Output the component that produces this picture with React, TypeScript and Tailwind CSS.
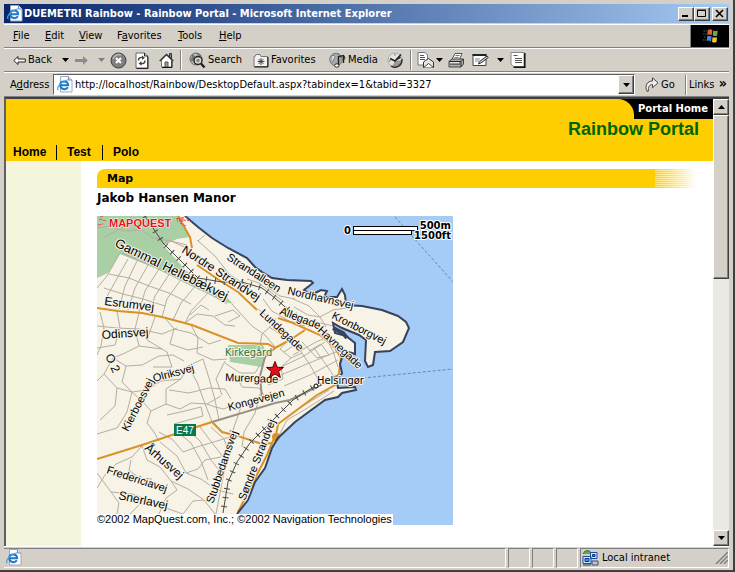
import type { ReactNode } from "react";

const ui = "font-['DejaVu_Sans_Condensed','DejaVu_Sans',sans-serif]";
const verdana = "font-['DejaVu_Sans',sans-serif] font-bold";
const arial = "font-['Liberation_Sans',sans-serif] font-bold";

const raised =
  "border border-t-white border-l-white border-r-[#404040] border-b-[#404040] bg-[#d4d0c8] shadow-[inset_-1px_-1px_0_#808080]";

function Caret({ dim = false, up = false }: { dim?: boolean; up?: boolean }) {
  return (
    <svg width="7" height="4" viewBox="0 0 7 4" className="shrink-0" fill={dim ? "#808080" : "#000"}>
      <path d={up ? "M0 4L3.5 0L7 4z" : "M0 0h7L3.5 4z"} />
    </svg>
  );
}

function Globe() {
  return (
    <svg width="17" height="17" viewBox="0 0 17 17" className="shrink-0">
      <path d="M4.500 .5h8l3.500 3.500v12H4.500z" fill="#fff" stroke="#9aa8bc" />
      <path d="M12.500 .5v3.500h3.500" fill="#dde6f0" stroke="#7b8aa3" />
      <path d="M11.800 11.200c-1.800 3.200-7.600 2.300-7.600-2.200 0-4.600 7.800-5 7.900.2H5" fill="none" stroke="#1e78c8" strokeWidth="2" />
      <path d="M2.500 14c-3-1 1.500-8.500 10.500-10.500" fill="none" stroke="#4aa0e4" strokeWidth="1.200" />
    </svg>
  );
}

function BackArrow() {
  return (
    <svg width="13" height="11" viewBox="0 0 13 11">
      <path d="M.8 5.5L5 1.5v2.500h7.3v3H5v2.500z" fill="#fff" stroke="#222" />
    </svg>
  );
}

function ForwardArrow() {
  return (
    <svg width="13" height="11" viewBox="0 0 13 11">
      <path d="M12.8 5.5L8 1v3H0v3h8v3z" fill="#8c8c8c" />
    </svg>
  );
}

function StopIcon() {
  return (
    <svg width="17" height="17" viewBox="0 0 17 17">
      <circle cx="8.5" cy="8.5" r="7.5" fill="#808080" stroke="#3c3c3c" />
      <path d="M3 7a6 6 0 0 1 8-4" stroke="#bbb" strokeWidth="1.5" fill="none" />
      <path d="M6 6l5 5M11 6l-5 5" stroke="#fff" strokeWidth="2" />
    </svg>
  );
}

function RefreshIcon() {
  return (
    <svg width="14" height="17" viewBox="0 0 14 17">
      <path d="M1 1h8.500l3 3v12H1z" fill="#fff" stroke="#666" />
      <path d="M9.500 1v3h3M13 4.500V16.500H1.500" fill="none" stroke="#222" />
      <path d="M3.500 8.500C3.500 6 5 5 8 5.500M10 8.500c0 2.500-1.500 3.500-4.500 3" fill="none" stroke="#444" strokeWidth="1.500" />
      <path d="M7 3.500L10 5.700 7 8zM6.500 9L3.500 11.500 6.500 13.700z" fill="#444" />
    </svg>
  );
}

function HomeIcon() {
  return (
    <svg width="15" height="16" viewBox="0 0 15 16">
      <path d="M10.500 5V1.500h2V7" fill="#888" stroke="#333" />
      <path d="M2.500 8v7h10V8l-5-5z" fill="#fff" stroke="#777" />
      <path d="M.7 9L7.500 2.500 14.300 9" fill="none" stroke="#333" strokeWidth="1.300" />
      <path d="M6 15v-5h3v5z" fill="#999" stroke="#555" />
      <path d="M13 9v6.500H3" stroke="#111" fill="none" />
    </svg>
  );
}

function SearchIcon() {
  return (
    <svg width="17" height="17" viewBox="0 0 17 17">
      <circle cx="7" cy="7" r="6" fill="#b8b8b8" stroke="#666" />
      <path d="M3 3c2 0 3 2 2 4S3 9 2 8M8 1c0 2 3 2 4 3" fill="#777" stroke="#666" />
      <circle cx="9" cy="8.500" r="4" fill="#d8d8d8" stroke="#222" strokeWidth="1.400" />
      <circle cx="9" cy="8.500" r="1.800" fill="#888" />
      <path d="M12 11.500l3.500 4" stroke="#222" strokeWidth="2.400" />
    </svg>
  );
}

function FavoritesIcon() {
  return (
    <svg width="16" height="15" viewBox="0 0 16 15">
      <path d="M1 3.500h1l1-2h4l1 2h6.500v10H1z" fill="#f2f2f2" stroke="#777" />
      <path d="M15 4v10H1.500" fill="none" stroke="#111" />
      <path d="M8 5v7M4.500 8.500h7M5.500 6l5 5M10.500 6l-5 5" stroke="#333" strokeWidth=".9" />
    </svg>
  );
}

function MediaIcon() {
  return (
    <svg width="17" height="17" viewBox="0 0 17 17">
      <circle cx="7" cy="7.500" r="6.300" fill="#aaa" stroke="#777" />
      <path d="M3 4c3-2 4 1 2 3s0 4-2 3M8 2c2 1 4 1 4 4" fill="#ddd" stroke="#777" />
      <path d="M9.500 13V4.500l5-1V11" fill="none" stroke="#222" strokeWidth="1.400" />
      <ellipse cx="7.800" cy="13.500" rx="2.200" ry="1.700" fill="#fff" stroke="#222" />
      <path d="M14.500 3.500c1.500 1 1.500 2 1 4" stroke="#222" fill="none" />
    </svg>
  );
}

function HistoryIcon() {
  return (
    <svg width="17" height="16" viewBox="0 0 17 16">
      <circle cx="8" cy="8" r="7" fill="#e4e4e4" stroke="#aaa" />
      <path d="M5 14.500A7 7 0 0 0 15 8L8 9z" fill="#999" />
      <path d="M14.800 7A7 7 0 0 1 4 14" fill="none" stroke="#333" strokeWidth="1.500" />
      <path d="M3 6.500L8 9l6-6.500" fill="none" stroke="#222" strokeWidth="1.600" />
      <path d="M8 9l5-4.500 1 1.500z" fill="#222" />
      <path d="M8 2v1.500M2 9h1.500" stroke="#555" />
    </svg>
  );
}

function MailIcon() {
  return (
    <svg width="17" height="16" viewBox="0 0 17 16">
      <path d="M1 .5h7l2.500 2.500v10H1z" fill="#fff" stroke="#777" />
      <path d="M3 3.500h4M3 5.500h5M3 7.500h5" stroke="#555" />
      <path d="M6.500 10l5-3.500 5 3.500v5.500h-10z" fill="#e8e8e8" stroke="#333" />
      <path d="M6.500 15.500l5-4 5 4" fill="#fff" stroke="#444" />
    </svg>
  );
}

function PrintIcon() {
  return (
    <svg width="17" height="15" viewBox="0 0 17 15">
      <path d="M4 6.500L7 .5h7l-2.500 6" fill="#fff" stroke="#555" />
      <path d="M7.500 2.500h4M6.500 4.500h4" stroke="#777" />
      <path d="M1 8.500l3-2.500h11.500v5L13 14H1z" fill="#b0b0b0" stroke="#444" />
      <path d="M1 8.500h12V14M13 8.500l2.500-2.500M2 11h10" fill="none" stroke="#222" />
      <path d="M2 9.800h9" stroke="#fff" />
    </svg>
  );
}

function EditIcon() {
  return (
    <svg width="17" height="14" viewBox="0 0 17 14">
      <path d="M1 1.500h13v11H1z" fill="#fff" stroke="#444" />
      <path d="M.5 2h14" stroke="#222" strokeWidth="2" />
      <path d="M3 6h5M3 8h4" stroke="#888" />
      <path d="M6.500 11l1-2.500L15 3l1.300 1.500-7.500 5.500z" fill="#ccc" stroke="#333" />
    </svg>
  );
}

function DiscussIcon() {
  return (
    <svg width="16" height="16" viewBox="0 0 16 16">
      <path d="M1 .5h13v14H3.500L1 12z" fill="#fff" stroke="#888" />
      <path d="M14.800 1v14.300H3.500" fill="none" stroke="#111" strokeWidth="1.500" />
      <path d="M3.500 3.500h4M5 6.500h7M5 8.500h7M5 10.500h7" stroke="#555" />
    </svg>
  );
}

function GoIcon() {
  return (
    <svg width="14" height="15" viewBox="0 0 14 15">
      <path d="M2 14.300C-.5 9 2 4 7.500 4V.8l5.500 5-5.500 5V7.500C4.500 7.500 3 10 3.500 14z" fill="#eee" stroke="#444" />
    </svg>
  );
}

function Throbber() {
  return (
    <svg width="18" height="16" viewBox="0 0 18 16">
      <g transform="skewX(-6) translate(2 0)">
        <path d="M5 2q2-1.500 4.500 0v5Q7 6 5 7z" fill="#e8602c" />
        <path d="M10.500 2.500q2.500 1 4.500 0v5q-2 1-4.500 0z" fill="#6aa84f" />
        <path d="M5 8.500q2-1.500 4.500 0v5Q7 12 5 13z" fill="#4a86d8" />
        <path d="M10.500 9q2.500 1 4.500 0v5q-2 1-4.500 0z" fill="#f4c430" />
        <path d="M1 3h3M1 6h3M2 9h2M1 12h3" stroke="#5a7fb8" strokeDasharray="1 1" />
      </g>
    </svg>
  );
}

function IntranetIcon() {
  return (
    <svg width="17" height="16" viewBox="0 0 17 16">
      <path d="M1 4c2-5 8-4 8 0" fill="#59b04a" stroke="#286b2a" />
      <path d="M8.500 2.500h6.500v6H8.500zM1 6.500h8v7H1z" fill="#d8ecff" stroke="#1a4a9c" />
      <path d="M3 8.500h4v3H3zM10.500 4.500h2.500v2h-2.500z" fill="#3aa6e8" stroke="#0b2c7a" />
      <path d="M10 11h6v4h-6z" fill="#b9c6dd" stroke="#39507c" />
      <path d="M1 15h8" stroke="#1a3a7c" />
    </svg>
  );
}

function TitleButton({ label, children }: { label: string; children: ReactNode }) {
  return (
    <button aria-label={label} className={`flex h-[14px] w-4 items-center justify-center ${raised}`}>
      <svg width="10" height="9" viewBox="0 0 10 9" fill="none" stroke="#000">
        {children}
      </svg>
    </button>
  );
}

const menus = [
  ["", "F", "ile", "w-8"],
  ["", "E", "dit", "w-[34px]"],
  ["", "V", "iew", "w-[38px]"],
  ["F", "a", "vorites", "w-[61px]"],
  ["", "T", "ools", "w-[41px]"],
  ["", "H", "elp", "w-8"],
];

const coast =
  "M88 0L101 11L115 22L131 32L150 42L158 51L165 56L175 62L190 64L214 65L216 67L207 74L214 79L224 74L230 75L227 81L240 81L245 73L248 79L249 89L265 90L285 94L301 100L309 106L312 112L306 126L293 135L278 136L276 149L271 151L268 145L269 124L262 119L245 112L236 107L238 117L249 120L258 127L258 138L252 136L246 139L243 148L245 157L240 166L241 172L258 171L259 174L245 177L241 181L228 184L198 206L181 222L175 232L168 252L158 266L151 284L140 298";

const minorRoads = [
  "M0 12L14 10L26 15L45 14L56 22L74 25L90 29", "M35 0L25 12L6 22", "M66 29L74 25L92 33L98 45L112 52",
  "M100 24L118 40L132 58L150 70", "M108 19L101 25", "M23 37L10 60L0 72", "M31 43L18 66L8 84", "M40 45L28 70L22 93",
  "M51 49L38 72L31 94", "M62 53L48 75L42 96", "M73 57L58 80L52 98", "M85 62L70 83L65 101", "M100 68L84 87L76 104",
  "M112 76L94 95L88 107", "M12 58L32 62L52 70L72 77L94 88", "M7 72L26 78L46 83L68 90", "M25 37L60 52L94 67L130 88",
  "M135 88L144 98L155 110L168 119L178 131", "M88 107L100 98L116 100L128 109L138 110", "M93 99L104 89L112 94", "M118 100L136 94L143 100L131 106",
  "M3 96L7 112L4 130L0 139", "M20 95L23 112L18 129L0 132", "M42 97L38 113L42 130L65 133", "M58 101L50 124L70 136L75 151L56 151",
  "M0 110L20 112L42 113L65 118L80 112", "M68 102L77 113L94 117L112 128L124 124", "M77 113L73 128L91 134L106 131", "M94 109L101 122L100 137L116 144L130 143",
  "M42 130L28 137L16 142L7 158L0 165", "M16 142L29 150L45 149L62 140L76 139L87 145", "M29 150L25 166L35 176L50 174L64 165L84 163",
  "M7 158L20 172L18 190L3 204", "M20 172L35 176L30 196L20 212L0 218", "M35 176L46 186L54 195L50 207L57 216L62 225",
  "M54 195L69 188L69 173L84 163L91 150L106 143", "M69 188L83 193L94 187L110 188L124 180", "M91 150L100 166L107 185L115 206",
  "M106 143L112 162L118 184L122 204", "M72 174L92 177L112 172L128 173L134 183", "M110 188L118 191L127 193L137 188",
  "M128 147L143 157L158 157L163 149", "M128 145L119 163L125 179", "M139 159L145 171L162 172L170 183", "M163 129L165 118L173 111L179 102",
  "M70 199L88 195L104 191L106 200L77 208", "M62 216L76 224L86 236L100 231L120 225L136 220", "M83 218L94 227L104 245L111 264",
  "M92 215L103 225L114 244L122 254", "M103 211L116 228L126 241", "M114 211L127 223L133 238", "M63 226L80 240L89 257L104 263L120 274L136 278",
  "M45 230L35 241L19 248L8 259L0 272", "M45 230L50 244L63 251L74 265L91 273L107 284L118 298", "M0 257L14 276L22 287L20 298",
  "M14 276L35 278L51 284L66 291L86 298", "M34 244L32 254L42 262L55 263", "M74 265L80 274L69 282L62 298", "M86 298L96 285L107 284",
  "M33 298L46 285L51 284", "M89 257L101 253L108 244L124 241", "M145 188L134 220L128 251L119 298", "M163 178L158 197L147 216L145 231",
  "M172 111L183 118L190 125L183 133L194 142L205 137L199 128L187 136", "M194 142L184 151L186 163L171 169", "M184 151L207 140L228 126",
  "M184 159L210 148L241 135", "M187 170L213 159L241 144", "M205 137L213 149L222 165", "M217 132L230 150L238 162", "M229 122L236 135L241 151",
  "M196 139L219 126L231 121", "M205 126L220 142L232 139L224 128L212 135", "M208 110L192 105L175 95L166 83",
  "M161 93L172 102L183 118", "M196 83L212 90L223 101L236 94L249 92", "M197 91L211 99L223 101L229 111", "M219 106L245 112",
  "M181 221L190 204L209 193L237 175", "M184 206L206 190L232 174", "M150 63L162 67L176 78L187 86", "M167 60L171 72L183 80L198 83",
];

const orangeRoads = [
  "M0 92L21 95L45 97L65 101L95 109L141 127L171 128L178 132L193 124L208 114",
  "M81 0L93 21L95 32",
  "M100 49L125 66L141 76L160 94",
  "M181 102L196 107L223 119L238 132L244 142L242 157L238 169L220 179L181 208L179 219L175 227L170 239L141 296",
  "M0 243L45 229L78 218L115 206L125 216L141 220L165 228L175 227",
];

const rails = [
  "M48 0L66 27L86 47L101 62L125 66L145 66L165 72L178 82L203 104L220 111",
  "M223 167L196 184L173 207L153 227L140 246L131 266L126 297",
];

type Label = [text: string, x: number, y: number, angle: number, size?: number];
const labels: Label[] = [
  ["Gammal Hellebækvej", 17, 30, 26, 13],
  ["Nordre Strandvej", 84, 36, 33],
  ["Strandalleen", 129, 43, 33, 11],
  ["Esrumvej", 7, 89, 7],
  ["Odinsvej", 5, 123, -4],
  ["O 2", 8, 140, 65],
  ["Lundegade", 162, 98, 43, 11],
  ["Nordhavnsvej", 190, 78, 13, 11],
  ["Allegade", 182, 98, 21, 11],
  ["Havnegade", 220, 115, 43, 11],
  ["Kronborgvej", 234, 102, 27, 11],
  ["Murergade", 128, 165, 2, 11],
  ["Kongevejen", 132, 195, -15, 11],
  ["Olriksvej", 57, 166, -15, 11],
  ["Kierboesvej", 31, 216, -63, 11],
  ["Århusvej", 47, 233, 41],
  ["Fredericiavej", 9, 257, 18, 11],
  ["Snerlavej", 21, 283, 12],
  ["Stubbedamsvej", 116, 288, -71, 11],
  ["Søndre Strandvej", 148, 285, -69, 11],
];

function TownMap() {
  return (
    <svg
      role="img"
      aria-label="Map of Helsingør"
      width="356"
      height="309"
      viewBox="0 0 356 309"
      className="block font-['Liberation_Sans',sans-serif]"
    >
      <rect width="356" height="309" fill="#a5cbf7" />
      <path d={`${coast}L0 298L0 0z`} fill="#f7f3e7" />
      <path d="M0 0H83L93 21L80 23L66 29L85 50L98 64L128 79L136 88L128 86L94 70L60 53L23 38L11 57L0 62z" fill="#a9cfa5" />
      <path d="M131 129H166L170 139L165 151L133 146z" fill="#a9cfa5" />
      <g fill="none" stroke="#b5ada0">
        {minorRoads.map((d) => (
          <path key={d} d={d} />
        ))}
      </g>
      <g fill="none" stroke="#999185" strokeWidth="2">
        <path d="M115 206L178 187L193 184L220 171L241 159" />
        <path d="M165 183L163 160L168 141L178 132" />
      </g>
      <g fill="none" stroke="#da9126" strokeWidth="2">
        {orangeRoads.map((d) => (
          <path key={d} d={d} />
        ))}
      </g>
      <circle cx="179" cy="221" r="4" fill="#da9126" />
      <g fill="none" stroke="#4a4a4a">
        {rails.map((d) => (
          <g key={d}>
            <path d={d} />
            <path d={d} strokeWidth="6" strokeDasharray="1 8" />
          </g>
        ))}
      </g>
      <path d={coast} fill="none" stroke="#38425c" strokeWidth="2" />
      <path d="M236 112L246 117L250 122" fill="none" stroke="#38425c" strokeWidth="4" />
      <path d="M298 1L356 66M266 162L356 153" fill="none" stroke="#5f8da3" strokeDasharray="3 2" />
      <g stroke="#f7f3e7" strokeWidth="2" paintOrder="stroke" strokeLinejoin="round">
        {labels.map(([text, x, y, angle, size = 12]) => (
          <text key={text} fontSize={size} transform={`translate(${x} ${y}) rotate(${angle})`}>
            {text}
          </text>
        ))}
      </g>
      <g className="font-['DejaVu_Sans_Condensed','DejaVu_Sans',sans-serif]" fontSize="11" stroke="#f7f3e7" strokeWidth="2" paintOrder="stroke">
        <text x="128" y="140" fill="#287038">Kirkegård</text>
        <text x="220" y="168">Helsingør</text>
      </g>
      <circle cx="219" cy="170" r="2" fill="#fff" stroke="#000" />
      <rect x="77" y="208" width="22" height="12" fill="#087848" />
      <text x="88" y="218" textAnchor="middle" fontSize="10" fill="#fff">E47</text>
      <path
        d="M178 145.500L180.300 151.300L186.500 151.500L181.600 155.400L183.400 161.500L178 158L172.600 161.500L174.400 155.400L169.500 151.500L175.700 151.300z"
        fill="#e3101c"
        stroke="#500"
      />
      <path d="M2 3l7 2M1 9l5-1M3 1l4-1M84 2l7-1M86 4l9 1M83 7l6 3" stroke="#ee4850" strokeDasharray="3 1" />
      <text x="12" y="11" fontSize="11" fontWeight="bold" fill="#e81020" stroke="#fff" strokeWidth="1" paintOrder="stroke">
        MAPQUEST
      </text>
      <text x="79" y="6" fontSize="5" fill="#e81020">TM</text>
      <g fill="#fff" stroke="#000">
        <rect x="256.500" y="10.500" width="64" height="4" />
        <rect x="256.500" y="14.500" width="58" height="4" />
      </g>
      <g className="font-['DejaVu_Sans',sans-serif]" fontWeight="bold" fontSize="10" stroke="#fff" strokeWidth="2" paintOrder="stroke">
        <text x="247" y="18">0</text>
        <text x="354" y="13" textAnchor="end">500m</text>
        <text x="354" y="23" textAnchor="end">1500ft</text>
      </g>
      <rect y="298" width="296" height="11" fill="#fff" />
      <text x="0" y="307" fontSize="11">
        ©2002 MapQuest.com, Inc.; ©2002 Navigation Technologies
      </text>
    </svg>
  );
}

function Separator() {
  return <div className="h-5 w-0.5 shrink-0 border-l border-[#808080] bg-white" />;
}

function ToolButton({ label, className, children }: { label: string; className: string; children: ReactNode }) {
  return (
    <button aria-label={label} className={`flex shrink-0 items-center gap-0.5 ${className}`}>
      {children}
    </button>
  );
}

const bar = "flex shrink-0 items-center border-t border-white border-b border-b-[#808080]";
const pane = "h-5 border border-t-[#808080] border-l-[#808080] border-r-white border-b-white";

export default function App() {
  return (
    <div
      className={`flex h-screen w-full flex-col overflow-hidden border-r-2 border-b-2 border-r-[#404040] border-b-[#404040] bg-[#d4d0c8] pt-1 pr-1 pb-0.5 pl-1 text-[11px] leading-4 text-black ${ui}`}
    >
      <header className="flex h-[19px] shrink-0 items-center bg-linear-to-r from-[#0a246a] to-[#a6caf0] pr-px pl-0.5">
        <Globe />
        <h1 className="grow pl-px font-bold whitespace-nowrap text-white">
          DUEMETRI Rainbow - Rainbow Portal - Microsoft Internet Explorer
        </h1>
        <div className="flex">
          <TitleButton label="Minimize">
            <path d="M1 7h6" strokeWidth="2" />
          </TitleButton>
          <TitleButton label="Maximize">
            <path d="M.5 1.500h8v6h-8zM0 1h9" />
          </TitleButton>
          <div className="w-0.5" />
          <TitleButton label="Close">
            <path d="M1 1l7 7M8 1L1 8" strokeWidth="1.600" />
          </TitleButton>
        </div>
      </header>

      <nav className={`${bar} mt-px h-6 pl-[9px]`}>
        {menus.map(([pre, key, rest, width]) => (
          <button key={key + rest} className={`${width} shrink-0 text-left`}>
            {pre}
            <span className="underline">{key}</span>
            {rest}
          </button>
        ))}
        <div className="ml-auto flex h-[22px] w-[39px] items-center justify-center border-l border-[#808080] bg-black">
          <Throbber />
        </div>
      </nav>

      <div className={`${bar} h-6 pl-[9px]`}>
        <ToolButton label="Back" className="w-[62px]">
          <BackArrow />
          <span className="w-8 text-left">Back</span>
          <Caret />
        </ToolButton>
        <ToolButton label="Forward" className="w-[35px]">
          <ForwardArrow />
          <span className="w-1.5" />
          <Caret dim />
        </ToolButton>
        <ToolButton label="Stop" className="w-[25px]"><StopIcon /></ToolButton>
        <ToolButton label="Refresh" className="w-6"><RefreshIcon /></ToolButton>
        <ToolButton label="Home" className="w-[21px]"><HomeIcon /></ToolButton>
        <Separator />
        <ToolButton label="Search" className="ml-[7px] w-16"><SearchIcon />Search</ToolButton>
        <ToolButton label="Favorites" className="w-[76px]"><FavoritesIcon />Favorites</ToolButton>
        <ToolButton label="Media" className="w-[58px]"><MediaIcon />Media</ToolButton>
        <ToolButton label="History" className="w-[23px]"><HistoryIcon /></ToolButton>
        <Separator />
        <ToolButton label="Mail" className="ml-[5px] w-[31px]"><MailIcon /><Caret /></ToolButton>
        <ToolButton label="Print" className="w-6"><PrintIcon /></ToolButton>
        <ToolButton label="Edit" className="w-[38px]">
          <EditIcon />
          <span className="w-1" />
          <Caret />
        </ToolButton>
        <ToolButton label="Discuss" className="w-4"><DiscussIcon /></ToolButton>
      </div>

      <form className={`${bar} h-[25px] pl-1.5`} onSubmit={(e) => e.preventDefault()}>
        <label htmlFor="address" className="w-[43px] shrink-0">
          A<span className="underline">d</span>dress
        </label>
        <div className="flex h-[21px] min-w-0 grow items-center border border-t-[#606060] border-l-[#606060] border-r-white border-b-white bg-white pl-0.5">
          <Globe />
          <input
            id="address"
            className="h-4 min-w-0 grow pl-0.5 outline-none"
            defaultValue="http://localhost/Rainbow/DesktopDefault.aspx?tabindex=1&tabid=3327"
          />
          <button type="button" aria-label="Show addresses" className={`flex h-[19px] w-4 items-center justify-center ${raised}`}>
            <Caret />
          </button>
        </div>
        <button className="ml-2.5 flex w-10 shrink-0 items-center gap-0.5">
          <GoIcon />
          Go
        </button>
        <Separator />
        <button type="button" className="flex w-[42px] shrink-0 justify-between pl-0.5">
          Links
          <span className="-mt-1 pr-0.5 text-sm font-bold">»</span>
        </button>
      </form>

      <div className="flex min-h-0 grow border-t-2 border-l-2 border-t-[#404040] border-l-[#606060]">
        <main className="flex min-w-0 grow flex-col overflow-hidden bg-white">
          <div className="flex h-[62px] shrink-0 flex-col bg-[#ffce00]">
            <div className="flex h-5 shrink-0 justify-end">
              <div className="w-4 bg-black">
                <div className="h-5 w-4 rounded-tr-[16px] bg-[#ffce00]" />
              </div>
              <a href="#portal" className={`bg-black pr-[5px] pl-1 text-[10px] leading-5 text-white ${verdana}`}>
                Portal Home
              </a>
            </div>
            <h2 className={`pr-3.5 text-right text-lg leading-5 text-[#006400] ${arial}`}>Rainbow Portal</h2>
            <nav className={`flex items-center divide-x divide-black pt-1.5 text-xs leading-[15px] ${arial}`}>
              <a href="#home" className="w-[51px] pl-[7px]">Home</a>
              <a href="#test" className="w-[46px] pl-2.5">Test</a>
              <a href="#polo" className="pl-2.5">Polo</a>
            </nav>
          </div>
          <div className="flex min-h-0 grow">
            <aside className="w-[75px] shrink-0 bg-[#f5f5dc]" />
            <section className="min-w-0 grow pt-2 pr-4 pl-4">
              <div className="flex h-[19px] overflow-hidden rounded-tl-[8px]">
                <h3 className={`grow bg-[#ffce00] pl-2.5 leading-5 ${verdana}`}>Map</h3>
                <div className="w-[42px] bg-[repeating-linear-gradient(to_bottom,transparent_0_1px,#ffffff80_1px_2px),linear-gradient(to_right,#ffce00,#fff)]" />
              </div>
              <h4 className={`mb-2.5 pt-0.5 text-xs leading-4 ${verdana}`}>Jakob Hansen Manor</h4>
              <TownMap />
            </section>
          </div>
        </main>
        <div className="flex w-4 shrink-0 flex-col bg-[#ebe9e5]">
          <button aria-label="Scroll up" className={`flex h-4 shrink-0 items-center justify-center ${raised}`}>
            <Caret up />
          </button>
          <div className={`h-[164px] ${raised}`} />
          <div className="grow" />
          <button aria-label="Scroll down" className={`flex h-4 shrink-0 items-center justify-center ${raised}`}>
            <Caret />
          </button>
        </div>
      </div>

      <footer className="flex h-[22px] shrink-0 items-center gap-0.5 border-t border-white">
        <div className={`${pane} flex grow items-center border-l-0 pl-px`}>
          <Globe />
        </div>
        <div className={`${pane} w-[22px]`} />
        <div className={`${pane} w-[22px]`} />
        <div className={`${pane} w-[22px]`} />
        <div className={`${pane} flex w-[149px] items-center gap-[3px] pl-px`}>
          <IntranetIcon />
          <span className="grow">Local intranet</span>
          <svg width="13" height="13" viewBox="0 0 13 13" stroke="#808080" strokeWidth="1.500">
            <path d="M1 13L13 1M5 13l8-8M9 13l4-4" />
          </svg>
        </div>
      </footer>
    </div>
  );
}
